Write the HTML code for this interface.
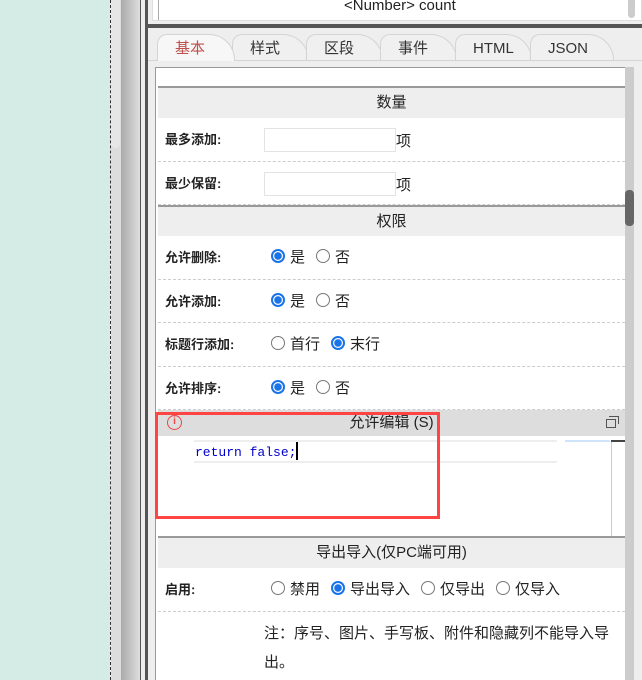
<!DOCTYPE html>
<html><head><meta charset="utf-8"><style>
*{margin:0;padding:0;box-sizing:border-box}
body{width:642px;height:680px;overflow:hidden;position:relative;background:#eee;font-family:"Liberation Sans","Noto Sans CJK SC",sans-serif;font-size:15px;color:#222}
.a{position:absolute}
.lbl{position:absolute;left:165px;font-weight:bold;font-size:13px}
.inp{position:absolute;left:264px;width:132px;height:24px;border:1px solid #e3e3e3;background:#fff}
.hd{position:absolute;left:158px;width:467px;background:#eee;border-top:2px solid #999;text-align:center;font-size:15px}
.dash{position:absolute;left:158px;width:467px;border-top:1px dashed #ccc}
.r{display:inline-block;width:14px;height:14px;border:1px solid #777;border-radius:50%;vertical-align:-1px;margin-right:5px;background:#fff}
.r.on{border:2px solid #1a73e8;background:radial-gradient(circle,#1a73e8 0 3.5px,#fff 4px)}
.r.m{margin-left:11px}
.opt{position:absolute;font-size:15px}
.tab{position:absolute;top:34px;height:27px;border:1px solid #d4d4d4;border-bottom:none;border-radius:10px 26px 0 0;background:#f0f0f0;padding-left:17px;line-height:27px;font-size:15px;color:#333}
</style></head><body>
<div class="a" style="left:0;top:0;width:110px;height:680px;background:#d4ece5"></div>
<div class="a" style="left:110px;top:0;width:1px;height:680px;border-left:1px dashed #333"></div>
<div class="a" style="left:111px;top:0;width:10px;height:680px;background:#ddd"></div>
<div class="a" style="left:111px;top:0;width:9px;height:148px;background:#e6e6e6;border-radius:0 0 4px 4px"></div>
<div class="a" style="left:121px;top:0;width:19px;height:680px;background:linear-gradient(90deg,#aaa,#dedede)"></div>
<div class="a" style="left:140px;top:0;width:1px;height:680px;background:#555"></div>
<div class="a" style="left:141px;top:0;width:4px;height:680px;background:#eee"></div>
<div class="a" style="left:145px;top:0;width:3px;height:680px;background:#555"></div>
<div class="a" style="left:152px;top:0;width:490px;height:21px;background:#fff;border:1px solid #ddd;border-top:none"></div>
<div class="a" style="left:158px;top:0;width:1px;height:20px;background:#aaa"></div>
<div class="a" style="left:344px;top:-3px;font-size:15px">&lt;Number&gt; count</div>
<div class="a" style="left:628px;top:0;width:7px;height:18px;background:#ccc;border-radius:0 0 4px 4px"></div>
<div class="a" style="left:148px;top:24px;width:494px;height:4px;background:#555"></div>
<div class="tab" style="left:157px;width:78px;color:#c0504d;background:#f7f7f7;z-index:2">基本</div>
<div class="tab" style="left:232px;width:77px">样式</div>
<div class="tab" style="left:306px;width:77px">区段</div>
<div class="tab" style="left:380px;width:77px">事件</div>
<div class="tab" style="left:455px;width:77px">HTML</div>
<div class="tab" style="left:530px;width:84px">JSON</div>
<div class="a" style="left:148px;top:60px;width:494px;height:1px;background:#d4d4d4"></div>
<div class="a" style="left:155px;top:67px;width:472px;height:613px;background:#fff;border:1px solid #999;border-right:none;border-bottom:none"></div>
<div class="a" style="left:625px;top:67px;width:9px;height:613px;background:#ccc"></div>
<div class="a" style="left:625px;top:190px;width:9px;height:36px;background:#666;border-radius:4px"></div>

<div class="hd" style="top:86px;height:32px;line-height:30px">数量</div>
<div class="lbl" style="top:129px">最多添加:</div><div class="inp" style="top:128px"></div><div class="a" style="left:396px;top:130px">项</div>
<div class="dash" style="top:161px"></div>
<div class="lbl" style="top:173px">最少保留:</div><div class="inp" style="top:172px"></div><div class="a" style="left:396px;top:174px">项</div>
<div class="dash" style="top:204px"></div>
<div class="hd" style="top:205px;height:31px;line-height:29px">权限</div>
<div class="lbl" style="top:247px">允许删除:</div>
<div class="opt" style="left:271px;top:246px"><span class="r on"></span>是<span class="r m"></span>否</div>
<div class="dash" style="top:279px"></div>
<div class="lbl" style="top:291px">允许添加:</div>
<div class="opt" style="left:271px;top:290px"><span class="r on"></span>是<span class="r m"></span>否</div>
<div class="dash" style="top:322px"></div>
<div class="lbl" style="top:334px">标题行添加:</div>
<div class="opt" style="left:271px;top:333px"><span class="r"></span>首行<span class="r on m"></span>末行</div>
<div class="dash" style="top:366px"></div>
<div class="lbl" style="top:378px">允许排序:</div>
<div class="opt" style="left:271px;top:377px"><span class="r on"></span>是<span class="r m"></span>否</div>
<div class="dash" style="top:409px"></div>
<div class="a" style="left:158px;top:410px;width:467px;height:26px;background:#ddd;text-align:center;line-height:26px;font-size:15px">允许编辑 (S)</div>
<div class="a" style="left:167px;top:415px;width:15px;height:15px;border:1.5px solid #e44;border-radius:50%;color:#e44;font-size:10px;line-height:12px;text-align:center;font-weight:bold">i</div>
<div class="a" style="left:606px;top:419px;width:10px;height:9px;border:1.5px solid #555"></div>
<div class="a" style="left:609px;top:416px;width:10px;height:8px;border:1.5px solid #555;border-left:none;border-bottom:none"></div>
<div class="a" style="left:194px;top:440px;width:363px;height:23px;border-top:2px solid #eee;border-bottom:2px solid #eee"></div>
<div class="a" style="left:195px;top:442px;font-family:'Liberation Mono',monospace;font-size:13px;color:#00c">return false;<span style="display:inline-block;width:2px;height:18px;background:#000;vertical-align:-4px"></span></div>
<div class="a" style="left:565px;top:440px;width:45px;height:2px;background:#cfe3fb"></div>
<div class="a" style="left:611px;top:440px;width:1px;height:97px;background:#ccc"></div>
<div class="a" style="left:611px;top:440px;width:14px;height:2px;background:#444"></div>
<div class="a" style="left:155px;top:412px;width:285px;height:107px;border:3px solid #f44"></div>
<div class="hd" style="top:536px;height:32px;line-height:30px">导出导入(仅PC端可用)</div>
<div class="lbl" style="top:579px">启用:</div>
<div class="opt" style="left:271px;top:578px"><span class="r"></span>禁用<span class="r on m"></span>导出导入<span class="r m"></span>仅导出<span class="r m"></span>仅导入</div>
<div class="dash" style="top:611px"></div>
<div class="a" style="left:264px;top:619px;width:352px;line-height:29px;font-size:15px">注：序号、图片、手写板、附件和隐藏列不能导入导出。</div>
</body></html>
